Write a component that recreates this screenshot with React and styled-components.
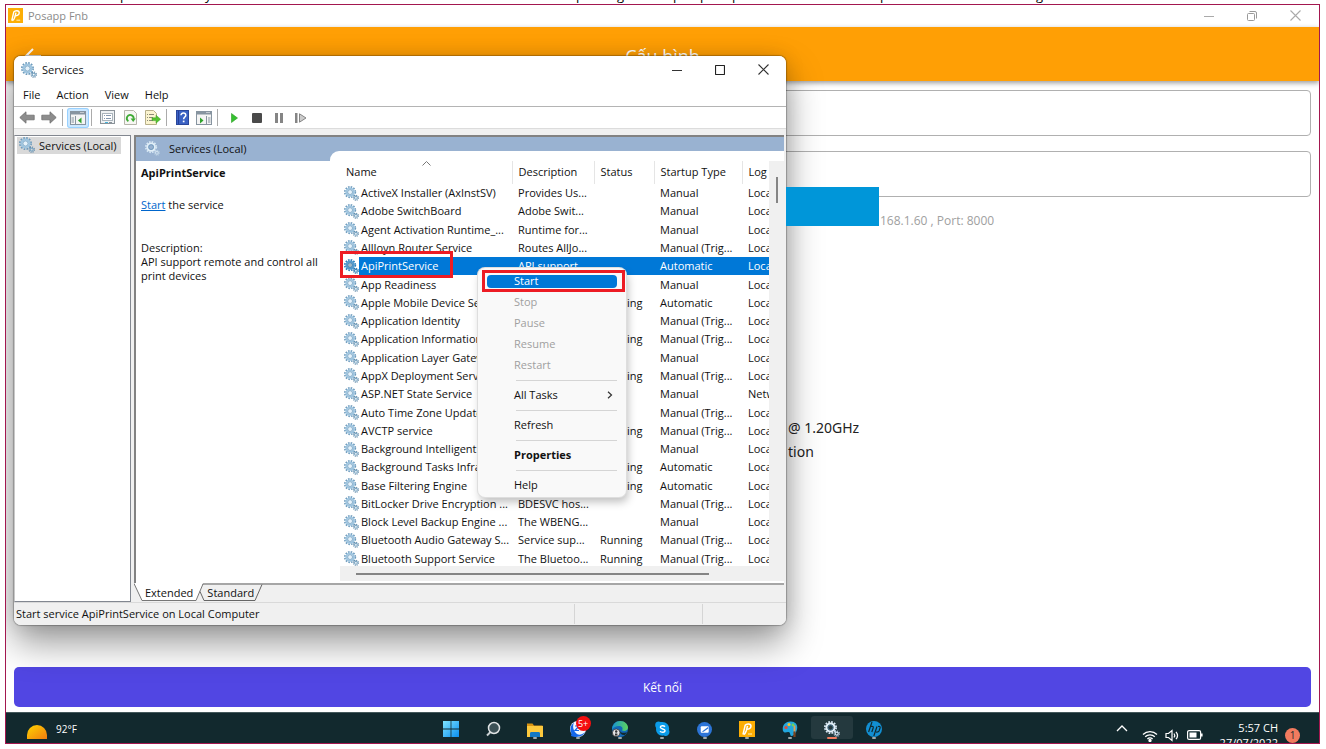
import React from 'react';
import styled, { createGlobalStyle, css } from 'styled-components';

const GlobalStyle = createGlobalStyle`
  * { box-sizing: border-box; }
  body { margin: 0; background: #fff; overflow: hidden; }
  body, button, input, table { font-family: "Open Sans", "Noto Sans", sans-serif; font-size: 11px; }
  button { border: none; background: none; padding: 0; margin: 0; color: inherit; }
  svg { display: block; flex: none; }
`;

const Page = styled.div`
  display: flex;
  flex-direction: column;
  min-height: 100vh;
  padding: 0 6px 5px 5px;
`;

const Caption = styled.div`
  display: grid;
  grid-template-columns: 115px 85px 371px 41px 56px 27px 32px 148px 156px 1fr;
  grid-template-rows: 4px;
  align-items: end;
  height: 4px;
  overflow: hidden;
  font-size: 13px;
  line-height: 18px;
`;

const Screen = styled.main`
  position: relative;
  flex: 1;
  display: flex;
  flex-direction: column;
  border: 1px solid #a3174f;
  overflow: hidden;
`;

const AppTitle = styled.header`
  display: flex;
  align-items: center;
  gap: 5px;
  height: 22px;
  padding: 0 18px 1px 2px;
  color: #8b8b8b;
`;

const TitleButtons = styled.div`
  display: flex;
  align-items: center;
  gap: ${p => p.$gap}px;
  margin-left: auto;
`;

const AppBar = styled.div`
  position: relative;
  display: grid;
  grid-template-columns: 40px 1fr 40px;
  align-items: center;
  height: 54px;
  padding: 3px 18px 0;
  background: #ff9f05;
  color: #fff;
  box-shadow: 0 2px 5px rgba(0, 0, 0, 0.4);
`;

const AppHeading = styled.h1`
  margin: 0;
  font-size: 18px;
  font-weight: 400;
  line-height: 24px;
  text-align: center;
`;

const Form = styled.form`
  flex: 1;
  display: flex;
  flex-direction: column;
  padding: 9px 8px 5px;
`;

const Field = styled.input`
  width: 100%;
  height: 46px;
  margin-bottom: 15px;
  padding: 0 12px;
  border: 1px solid #b0b0b0;
  border-radius: 4px;
  background: #fff;
`;

const Address = styled.p`
  margin: 0;
  padding-left: 866px;
  font-size: 12px;
  line-height: 18px;
  color: #a0a0a0;
`;

const Device = styled.p`
  margin: 186px 0 0;
  padding-left: 774px;
  font-family: "Noto Sans", sans-serif;
  font-size: 14px;
  line-height: 24px;
  color: #222;
`;

const Connect = styled.button`
  height: 40px;
  margin-top: auto;
  border-radius: 5px;
  background: #5146e3;
  color: #fff;
  font-size: 12px;
`;

const Redaction = styled.div`
  position: absolute;
  left: 770px;
  top: 182px;
  width: 103px;
  height: 39px;
  background: #0096d9;
`;

const Window = styled.section`
  position: absolute;
  left: 8px;
  top: 51px;
  width: 772px;
  border-radius: 7px;
  background: #f0f0f0;
  color: #111;
  overflow: hidden;
`;

const WindowShadow = styled.div`
  position: absolute;
  left: 8px;
  top: 51px;
  width: 772px;
  height: 569px;
  border-radius: 7px;
  box-shadow: 0 0 1px 1px rgba(0, 0, 0, 0.25), 0 0 20px rgba(0, 0, 0, 0.12), 0 18px 36px rgba(0, 0, 0, 0.4);
`;

const WindowTitle = styled.div`
  display: flex;
  align-items: center;
  gap: 5px;
  height: 28px;
  padding: 0 17px 1px 7px;
  background: #fff;
`;

const MenuBar = styled.nav`
  display: flex;
  gap: 16px;
  height: 23px;
  padding: 0 9px 2px;
  border-bottom: 1px solid #b4b4b4;
  background: #fff;
`;

const ToolBar = styled.div`
  display: flex;
  align-items: center;
  height: 22px;
  padding-left: 2px;
  background: #fff;
  border-bottom: 1px solid #dcdcdc;
`;

const Tool = styled.button`
  display: grid;
  place-items: center;
  width: ${p => p.$width || 22}px;
  height: 20px;
  ${p => p.$active && css`
    background: #cce8ff;
    box-shadow: inset 0 0 0 1px #99d1ff;
    border-radius: 3px;
  `}
`;

const Divider = styled.span`
  width: 1px;
  height: 17px;
  margin: 0 4px 0 2px;
  background: #ababab;
`;

const Panes = styled.div`
  display: flex;
  gap: 3px;
  padding-top: 6px;
`;

const Tree = styled.div`
  width: 117px;
  height: 467px;
  border: 1px solid #828790;
  border-left-color: #c8c8c8;
  background: #fff;
  padding: 1px 2px;
`;

const TreeItem = styled.div`
  display: flex;
  align-items: center;
  gap: 4px;
  width: 104px;
  height: 17px;
  padding: 0 0 1px 2px;
  background: #d9d9d9;
  white-space: nowrap;
`;

const Right = styled.div`
  flex: 1;
  min-width: 0;
  padding-right: 2px;
`;

const RightFrame = styled.div`
  height: 448px;
  border-left: 2px solid #828282;
  border-top: 2px solid #828282;
  background: #fff;
`;

const PaneHeader = styled.div`
  display: flex;
  align-items: center;
  gap: 9px;
  height: 24px;
  padding: 0 0 1px 9px;
  background: #99b2d1;
`;

const Split = styled.div`
  display: grid;
  grid-template-columns: 194px 1fr;
`;

const Details = styled.div`
  padding: 5px;
  line-height: 14px;
  white-space: nowrap;

  h2 { margin: 0 0 18px; font-size: 11px; line-height: 14px; }
  p { margin: 0 0 29px; }
  a { color: #0066cc; }
`;

const ListPane = styled.div`
  position: relative;
  margin-top: -10px;
  padding: 10px 0 0 10px;
  border-top-left-radius: 9px;
  background: #fff;
`;

const ListScroll = styled.div`
  display: grid;
  grid-template-columns: 1fr 15px;
`;

const TableClip = styled.div`
  height: 405px;
  overflow: hidden;
`;

const Table = styled.table`
  width: 100%;
  height: 407px;
  table-layout: fixed;
  border-collapse: collapse;
  line-height: 16px;
  white-space: nowrap;

  th { position: relative; height: 23px; padding: 0 0 2px 6px; font-weight: 400; text-align: left; border-right: 1px solid #e5e5e5; overflow: hidden; }
  th:last-child { border-right: none; }
  td { padding: 0 0 0 6px; overflow: hidden; }
  td:first-child { padding-left: 4px; }
  td:nth-child(2) { padding-left: 2px; }
`;

const SortArrow = styled.svg`
  position: absolute;
  left: 82px;
  top: 0;
`;

const Row = styled.tr`
  ${p => p.$selected && css`
    td:not(:first-child) { background: #0078d7; color: #fff; }
    svg { filter: brightness(0.75) saturate(2.5); }
  `}
`;

const VerticalBar = styled.div`
  padding: 16px 0 0 7px;
  background: #f0f0f0;

  &::before { content: ""; display: block; width: 2px; height: 26px; background: #858585; }
`;

const HorizontalBar = styled.div`
  height: 15px;
  padding: 7px 75px 0 16px;
  background: #f0f0f0;

  &::before { content: ""; display: block; height: 2px; background: #858585; }
`;

const Tabs = styled.div`
  position: relative;
  display: flex;
  gap: 14px;
  height: 19px;
  padding: 0 0 2px 11px;
  border-top: 2px solid #a6a6a6;
`;

const TabShape = styled.svg`
  position: absolute;
  left: 0;
  top: -2px;
`;

const Tab = styled.button`
  position: relative;
`;

const StatusBar = styled.footer`
  display: grid;
  grid-template-columns: 1fr 128px 83px;
  height: 23px;
  border-top: 1px solid #d9d9d9;

  span { margin: 1px 0; padding-left: 2px; line-height: 19px; border-right: 1px solid #d5d5d5; }
  span:last-child { border-right: none; }
`;

const ContextMenu = styled.div`
  position: absolute;
  left: 472px;
  top: 263px;
  width: 148px;
  padding: 3px 9px 1px;
  border-radius: 7px;
  background: #f9f9f9;
  box-shadow: 0 0 0 1px #dedede, 2px 5px 9px rgba(0, 0, 0, 0.25);

  hr { height: 1px; margin: 4px 0 4px 29px; border: none; background: #d5d5d5; }
`;

const MenuItem = styled.button`
  display: flex;
  align-items: center;
  justify-content: space-between;
  width: 100%;
  height: 21px;
  padding: 0 4px 2px 27px;
  color: #111;
  font-weight: ${p => (p.$bold ? 700 : 400)};

  &:disabled { color: #a0a0a0; }
  ${p => p.$hot && css`
    height: 13px;
    margin: 4px 0;
    border-radius: 4px;
    background: #0078d7;
    color: #fff;
  `}
`;

const Marker = styled.div`
  position: absolute;
  left: ${p => p.$x}px;
  top: ${p => p.$y}px;
  width: ${p => p.$w}px;
  height: ${p => p.$h}px;
  border: 3px solid #ed1c24;
`;

const TaskBar = styled.footer`
  position: relative;
  display: grid;
  grid-template-columns: 1fr 466px 1fr;
  grid-template-rows: 30px;
  height: 31px;
  border-top: 1px solid #44585b;
  background: #12292e;
  color: #fff;
  overflow: hidden;
`;

const Weather = styled.div`
  display: flex;
  align-items: flex-start;
  gap: 9px;
  padding: 12px 0 0 21px;
  font-size: 10px;
  line-height: 10px;

  span { margin-top: -1px; }
`;

const Apps = styled.div`
  display: grid;
  grid-template-columns: repeat(11, 1fr);
  padding: 3px 0 4px;
`;

const AppButton = styled.button`
  position: relative;
  display: grid;
  justify-items: center;
  align-content: end;
  border-radius: 3px;
  background: ${p => (p.$active ? '#24393e' : 'none')};

  &::after {
    content: "";
    width: ${p => (p.$active ? 10 : 4)}px;
    height: 2px;
    border-radius: 1px;
    background: ${p => (p.$active ? '#f27b5f' : p.$open ? '#a0a9ab' : 'transparent')};
  }
`;

const Count = styled.span`
  position: absolute;
  left: 19px;
  top: 0;
  width: 15px;
  height: 15px;
  border-radius: 50%;
  background: #f40f0f;
  font-size: 9px;
  line-height: 15px;
`;

const Tray = styled.div`
  display: flex;
  justify-content: flex-end;
  align-items: flex-start;
  gap: 7px;
  padding: 7px 19px 0 0;

  > svg { margin-top: 9px; }
  > svg:first-child { margin: 4px 7px 0 0; }
`;

const Clock = styled.div`
  width: 68px;
  font-size: 11px;
  line-height: 15px;
  text-align: right;
`;

const Notice = styled.span`
  width: 15px;
  height: 15px;
  margin-top: 8px;
  border-radius: 50%;
  background: #f27b5f;
  color: #1b2b30;
  font-size: 10px;
  line-height: 15px;
  text-align: center;
`;

const Gears = ({ size = 16, pale }) => (
    <svg width={size} height={size} viewBox="0 0 16 16" fill="none">
        <circle cx="6.5" cy="6.5" r="5.6" stroke={pale ? '#d5e6f3' : '#6f9cbd'} strokeWidth="1.8" strokeDasharray="1.7 1.23" />
        <circle cx="6.5" cy="6.5" r="4" fill={pale ? 'none' : '#e6f2fa'} stroke={pale ? '#e2eff8' : '#9dc4df'} strokeWidth="2" />
        <circle cx="6.5" cy="6.5" r="2.6" stroke="#5f90b4" strokeWidth="0.7" />
        <circle cx="12.7" cy="12.6" r="2.6" stroke={pale ? '#b8cfe2' : '#5d86a6'} strokeWidth="1.2" strokeDasharray="1.1 0.94" />
        <circle cx="12.7" cy="12.6" r="1.5" stroke={pale ? '#cfe0ee' : '#7ea8c5'} strokeWidth="1.2" />
    </svg>
);

const PosLogo = ({ size = 15 }) => (
    <svg width={size} height={size} viewBox="0 0 16 16">
        <rect width="16" height="16" fill="#fcae05" />
        <path d="M4 13.5 6.2 4.2C7.5 2.4 12 2.3 12 5.1c0 2.4-2.4 3.5-5 3.2M8.5 4.9 7.4 9.4c-.7 2-1.1 3.6-2.6 4.1" fill="none" stroke="#fff" strokeWidth="1.5" />
        <path d="M9 13h4" stroke="#fff3c8" strokeWidth="1" />
    </svg>
);

const Minimize = ({ color }) => (
    <svg width="10" height="10" viewBox="0 0 10 10"><path d="M0 5.5h10" stroke={color} /></svg>
);

const Maximize = ({ color, restore }) => (
    <svg width="10" height="10" viewBox="0 0 10 10" fill="none" stroke={color}>
        {restore ? (
            <>
                <rect x="0.5" y="2.5" width="7" height="7" rx="1" />
                <path d="M2.5.5H8A1.5 1.5 0 0 1 9.5 2v5.5" />
            </>
        ) : (
            <rect x="0.5" y="0.5" width="9" height="9" rx="0.6" strokeWidth="1.2" />
        )}
    </svg>
);

const Close = ({ color }) => (
    <svg width="11" height="11" viewBox="0 0 11 11"><path d="M.5.5l10 10M10.5.5l-10 10" stroke={color} strokeWidth="1.1" /></svg>
);

const ArrowIcon = ({ flip }) => (
    <svg width="16" height="13" viewBox="0 0 16 13">
        <path
            d="M.8 6.5 7 .8v3.4h8.2v4.6H7v3.4z"
            fill="#8d8d8d"
            stroke="#6e6e6e"
            strokeWidth="0.8"
            transform={flip ? 'translate(16 0) scale(-1 1)' : undefined}
        />
    </svg>
);

const PanelIcon = ({ flip }) => (
    <svg width="16" height="14" viewBox="0 0 16 14">
        <rect x=".5" y=".5" width="15" height="13" fill="#f4f4f4" stroke="#8794a0" />
        <path d="M1 1h14v2.5H1z" fill="#8794a0" />
        <path d="M10.5 1.5h1M12.5 1.5h1" stroke="#fff" />
        <path d={flip ? 'M10.5 5v9M12 7h2.5M12 9h2.5M12 11h2.5' : 'M5.5 5v9M1.5 7H4M1.5 9H4M1.5 11H4'} stroke="#8794a0" />
        <path d={flip ? 'M4 6.5 7.5 9.5 4 12.5z' : 'M11.5 6.5 8 9.5l3.5 3z'} fill="#2fa32b" />
    </svg>
);

const PropertiesIcon = () => (
    <svg width="15" height="15" viewBox="0 0 15 15">
        <rect x=".5" y=".5" width="14" height="13" fill="#eef1f3" stroke="#8a9299" />
        <rect x="2.5" y="3.5" width="10" height="7" fill="#fff" stroke="#aab4bc" />
        <path d="M4 5.5h1M6 5.5h5M4 8.5h1M6 8.5h5" stroke="#8498b0" />
        <path d="M5 12.5h3" stroke="#46b2d8" />
        <path d="M9 12.5h3" stroke="#8a9299" />
    </svg>
);

const RefreshIcon = () => (
    <svg width="13" height="15" viewBox="0 0 13 15">
        <path d="M.5.5h9l3 3v11H.5z" fill="#f7f7f3" stroke="#b5b5ab" />
        <path d="M4.4 11.2A3.4 3.4 0 1 1 9.6 8.8" fill="none" stroke="#3eaa35" strokeWidth="1.8" />
        <path d="M6.6 8.4h5.2L9.2 12z" fill="#3eaa35" />
    </svg>
);

const ExportIcon = () => (
    <svg width="16" height="15" viewBox="0 0 16 15">
        <path d="M.5.5h8l3 3v11H.5z" fill="#fbf4cf" stroke="#b8b08a" />
        <path d="M2 4.5h1M4 4.5h5M2 7.5h1M4 7.5h4M2 10.5h1M4 10.5h4" stroke="#8b8b78" />
        <path d="M7 7.8h4V5.2l4.6 4-4.6 4v-2.6H7z" fill="#55c330" stroke="#419e26" strokeWidth=".5" />
    </svg>
);

const HelpIcon = () => (
    <svg width="13" height="15" viewBox="0 0 13 15">
        <rect x=".5" y=".5" width="12" height="14" fill="#3b62c4" stroke="#2b479b" />
        <path d="M2.5 1v13" stroke="#26409a" />
        <path d="M5 5.2c0-3 4.8-2.8 4.8 0 0 1.7-2.2 1.9-2.2 4" fill="none" stroke="#fff" strokeWidth="1.5" />
        <rect x="6.8" y="10.6" width="1.7" height="1.7" fill="#fff" />
    </svg>
);

const services = [
    ['ActiveX Installer (AxInstSV)', 'Provides Us...', '', 'Manual', 'Local'],
    ['Adobe SwitchBoard', 'Adobe Swit...', '', 'Manual', 'Local'],
    ['Agent Activation Runtime_...', 'Runtime for...', '', 'Manual', 'Local'],
    ['AllJoyn Router Service', 'Routes AllJo...', '', 'Manual (Trig...', 'Local'],
    ['ApiPrintService', 'API support ...', '', 'Automatic', 'Local'],
    ['App Readiness', '', '', 'Manual', 'Local'],
    ['Apple Mobile Device Service', '', 'Running', 'Automatic', 'Local'],
    ['Application Identity', '', '', 'Manual (Trig...', 'Local'],
    ['Application Information', '', 'Running', 'Manual (Trig...', 'Local'],
    ['Application Layer Gateway ...', '', '', 'Manual', 'Local'],
    ['AppX Deployment Service ...', '', 'Running', 'Manual (Trig...', 'Local'],
    ['ASP.NET State Service', '', '', 'Manual', 'Network'],
    ['Auto Time Zone Updater', '', '', 'Manual (Trig...', 'Local'],
    ['AVCTP service', '', 'Running', 'Manual (Trig...', 'Local'],
    ['Background Intelligent T...', '', '', 'Manual', 'Local'],
    ['Background Tasks Infras...', '', 'Running', 'Automatic', 'Local'],
    ['Base Filtering Engine', '', 'Running', 'Automatic', 'Local'],
    ['BitLocker Drive Encryption ...', 'BDESVC hos...', '', 'Manual (Trig...', 'Local'],
    ['Block Level Backup Engine ...', 'The WBENG...', '', 'Manual', 'Local'],
    ['Bluetooth Audio Gateway S...', 'Service sup...', 'Running', 'Manual (Trig...', 'Local'],
    ['Bluetooth Support Service', 'The Bluetoo...', 'Running', 'Manual (Trig...', 'Local'],
];

const NameCol = styled.col`
  width: ${p => p.$w}px;
`;

const ServiceTable = () => (
    <Table>
        <colgroup>
            {[19, 153, 82, 60, 88].map(w => <NameCol key={w} $w={w} />)}
            <col />
        </colgroup>
        <thead>
            <tr>
                <th colSpan={2}>
                    Name
                    <SortArrow width="9" height="5" viewBox="0 0 9 5"><path d="M.5 4.5l4-4 4 4" fill="none" stroke="#777" /></SortArrow>
                </th>
                <th>Description</th>
                <th>Status</th>
                <th>Startup Type</th>
                <th>Log</th>
            </tr>
        </thead>
        <tbody>
            {services.map(([name, description, status, startup, account]) => (
                <Row key={name} $selected={name === 'ApiPrintService'}>
                    <td><Gears size={15} /></td>
                    <td>{name}</td>
                    <td>{description}</td>
                    <td>{status}</td>
                    <td>{startup}</td>
                    <td>{account}</td>
                </Row>
            ))}
        </tbody>
    </Table>
);

const ServicesWindow = () => (
    <Window>
        <WindowTitle>
            <Gears />
            <span>Services</span>
            <TitleButtons $gap={33}>
                <button aria-label="Minimize"><Minimize color="#333" /></button>
                <button aria-label="Maximize"><Maximize color="#222" /></button>
                <button aria-label="Close"><Close color="#333" /></button>
            </TitleButtons>
        </WindowTitle>
        <MenuBar>
            <button>File</button>
            <button>Action</button>
            <button>View</button>
            <button>Help</button>
        </MenuBar>
        <ToolBar>
            <Tool aria-label="Back"><ArrowIcon /></Tool>
            <Tool aria-label="Forward"><ArrowIcon flip /></Tool>
            <Divider />
            <Tool $active aria-label="Console tree"><PanelIcon /></Tool>
            <Divider />
            <Tool aria-label="Properties"><PropertiesIcon /></Tool>
            <Tool aria-label="Refresh" $width={24}><RefreshIcon /></Tool>
            <Tool aria-label="Export list"><ExportIcon /></Tool>
            <Divider />
            <Tool aria-label="Help"><HelpIcon /></Tool>
            <Tool aria-label="Action pane"><PanelIcon flip /></Tool>
            <Divider />
            <Tool aria-label="Start" $width={24}>
                <svg width="7" height="10" viewBox="0 0 7 10"><path d="M.5.5 6.5 5l-6 4.5z" fill="#35c12f" stroke="#289d24" strokeWidth=".6" /></svg>
            </Tool>
            <Tool aria-label="Stop">
                <svg width="10" height="10" viewBox="0 0 10 10"><rect width="10" height="10" rx="1" fill="#4a4a4a" /></svg>
            </Tool>
            <Tool aria-label="Pause">
                <svg width="8" height="10" viewBox="0 0 8 10"><path d="M0 0h3v10H0zM5 0h3v10H5z" fill="#858585" /></svg>
            </Tool>
            <Tool aria-label="Restart">
                <svg width="12" height="10" viewBox="0 0 12 10"><path d="M0 0h2.5v10H0z" fill="#858585" /><path d="M4.5.8 11 5 4.5 9.2z" fill="#ccc" stroke="#858585" /></svg>
            </Tool>
        </ToolBar>
        <Panes>
            <Tree>
                <TreeItem><Gears />Services (Local)</TreeItem>
            </Tree>
            <Right>
                <RightFrame>
                    <PaneHeader><Gears size={15} pale />Services (Local)</PaneHeader>
                    <Split>
                        <Details>
                            <h2>ApiPrintService</h2>
                            <p><a href="#start">Start</a> the service</p>
                            Description:<br />
                            API support remote and control all<br />
                            print devices
                        </Details>
                        <ListPane>
                            <ListScroll>
                                <TableClip><ServiceTable /></TableClip>
                                <VerticalBar />
                            </ListScroll>
                            <HorizontalBar />
                        </ListPane>
                    </Split>
                </RightFrame>
                <Tabs>
                    <TabShape width="132" height="19" viewBox="0 0 132 19">
                        <path d="M0 0h69l-7 17.5H8z" fill="#fff" />
                        <path d="M0 .5 8 17.5h54L69 1" fill="none" stroke="#777" />
                        <path d="M66 8.500l4 9h51l7-16" fill="none" stroke="#666" />
                    </TabShape>
                    <Tab>Extended</Tab>
                    <Tab>Standard</Tab>
                </Tabs>
            </Right>
        </Panes>
        <StatusBar>
            <span>Start service ApiPrintService on Local Computer</span>
            <span />
            <span />
        </StatusBar>
    </Window>
);

const ServiceMenu = () => (
    <ContextMenu>
        <MenuItem $hot>Start</MenuItem>
        <MenuItem disabled>Stop</MenuItem>
        <MenuItem disabled>Pause</MenuItem>
        <MenuItem disabled>Resume</MenuItem>
        <MenuItem disabled>Restart</MenuItem>
        <hr />
        <MenuItem>
            All Tasks
            <svg width="6" height="8" viewBox="0 0 6 8"><path d="M1 .8 4.500 4 1 7.200" fill="none" stroke="#333" strokeWidth="1.200" /></svg>
        </MenuItem>
        <hr />
        <MenuItem>Refresh</MenuItem>
        <hr />
        <MenuItem $bold>Properties</MenuItem>
        <hr />
        <MenuItem>Help</MenuItem>
    </ContextMenu>
);

const StartLogo = () => (
    <svg width="16" height="16" viewBox="0 0 16 16">
        <defs><linearGradient id="win" x2="1" y2="1"><stop stopColor="#7fe3ff" /><stop offset="1" stopColor="#0a8ef0" /></linearGradient></defs>
        <path d="M0 0h7.600v7.600H0zM8.400 0H16v7.600H8.400zM0 8.400h7.600V16H0zM8.400 8.400H16V16H8.400z" fill="url(#win)" />
    </svg>
);

const SearchLogo = () => (
    <svg width="16" height="16" viewBox="0 0 16 16">
        <path d="M2 14.500 5.500 11" stroke="#c9d0d2" strokeWidth="2" />
        <circle cx="9" cy="7" r="5.500" fill="#3c5156" stroke="#dfe3e4" strokeWidth="1.500" />
    </svg>
);

const FolderLogo = () => (
    <svg width="16" height="15" viewBox="0 0 16 15">
        <path d="M0 1.500h5.500l1.500 2h8.500V14H0z" fill="#d99312" />
        <path d="M0 4h16v11H0z" fill="#fdc93d" />
        <path d="M3 15v-3.500c0-1 .6-1.500 1.500-1.500h7c1 0 1.500.6 1.500 1.500V15z" fill="#1378c4" />
    </svg>
);

const ChatLogo = () => (
    <svg width="16" height="16" viewBox="0 0 16 16">
        <circle cx="8" cy="8" r="8" fill="#f3f7ff" />
        <path d="M4 1.500C.4 4-.6 9 1.500 12.400L1 15c6 2 12 .6 14-4-4 4-8 3-10 0S2.500 5 4 1.500z" fill="#1467ea" />
        <path d="M5 5h4L5 9.500h4" fill="none" stroke="#1467ea" strokeWidth="1.200" />
    </svg>
);

const EdgeLogo = () => (
    <svg width="16" height="16" viewBox="0 0 16 16">
        <defs><linearGradient id="edge" x2="1"><stop stopColor="#1793d1" /><stop offset="1" stopColor="#5ed65a" /></linearGradient></defs>
        <circle cx="8" cy="8" r="8" fill="#1268b8" />
        <path d="M.2 7C1 2.800 4.300 0 8.200 0 13 0 16 3.500 16 6.600c0 3.200-3.600 4.200-6 3 1.300-2 .4-4.600-3-4.600C4 5 1.300 6 .2 9z" fill="url(#edge)" />
        <path d="M8 10c1 2 4 2.500 7 1l-2 3c-3 .6-5-1-5-4z" fill="#12292e" />
        <circle cx="4.200" cy="11.800" r="3.800" fill="#e5e5e5" stroke="#333" strokeWidth=".8" />
        <circle cx="4.200" cy="10.500" r="1.200" fill="#333" />
        <path d="M3 14.500v-2h2.400v2" fill="#333" />
    </svg>
);

const SkypeLogo = () => (
    <svg width="15" height="16" viewBox="0 0 16 16">
        <path d="M1 1c2-1.500 4-1 5-.4 6-1.200 10 3.400 8.900 8.400C17 13 13 17 9.500 15 4 16 .4 11.500 1.200 7-.2 4.500 0 2.500 1 1z" fill="#0a9be8" />
        <path d="M10.600 5.600C9.500 4 5.600 4 5.700 6.200c.1 2.200 5 1.300 5 3.500 0 2.400-4.200 2.300-5.300.6" fill="none" stroke="#fff" strokeWidth="1.500" />
    </svg>
);

const MailLogo = () => (
    <svg width="15" height="15" viewBox="0 0 16 16">
        <circle cx="8" cy="8" r="8" fill="#2c74d6" />
        <rect x="4" y="4.500" width="8.500" height="7" rx="1" fill="#fff" />
        <path d="M5 10.500 12 5v2l-5 3.500z" fill="#2c74d6" />
    </svg>
);

const PaintLogo = () => (
    <svg width="16" height="16" viewBox="0 0 16 16">
        <path d="M1 10C-.5 4 4 0 9 .5c5 .4 7 3.500 6 8-1 3.500-3 6-5 6.500-2.500.4-1-3.500-3.500-4C4.500 10.600 3 13 1 10z" fill="#22a6dc" />
        <circle cx="4" cy="6.500" r="1.600" fill="#e84a35" />
        <circle cx="7" cy="3.500" r="1.500" fill="#f9c22e" />
        <circle cx="11" cy="4" r="1.400" fill="#6ad457" />
        <path d="M12.500 4.500v6" stroke="#e5a14c" strokeWidth="1.800" />
        <path d="M12.500 10.500V16" stroke="#7d431f" strokeWidth="2.200" />
    </svg>
);

const HpLogo = () => (
    <svg width="16" height="16" viewBox="0 0 16 16">
        <circle cx="8" cy="8" r="8" fill="#128fd3" />
        <path d="M6 1 2.600 11M4.700 5.500c2-.5 3 0 2.500 1.500L5.800 11M12 5.500c2-.5 2.500.4 2 1.700L13 10c-.4 1-1.200 1.200-3 1M11 5.500 7.800 15" fill="none" stroke="#12292e" strokeWidth="1.200" />
    </svg>
);

const pinned = [
    { name: 'Start', icon: <StartLogo /> },
    { name: 'Search', icon: <SearchLogo /> },
    { name: 'File Explorer', icon: <FolderLogo />, open: true },
    { name: 'Zalo', icon: <ChatLogo />, open: true, count: '5+' },
    { name: 'Edge', icon: <EdgeLogo />, open: true },
    { name: 'Skype', icon: <SkypeLogo />, open: true },
    { name: 'Mail', icon: <MailLogo />, open: true },
    { name: 'Posapp', icon: <PosLogo size={16} />, open: true },
    { name: 'Paint', icon: <PaintLogo />, open: true },
    { name: 'Services', icon: <Gears size={16} pale />, open: true, active: true },
    { name: 'HP', icon: <HpLogo />, open: true },
];

// only the descenders of the line above reach into view
const captionTail = ['p', 'y', 'p', 'g', 'p', 'p', 'p', 'p', 'g'];

export default function App() {
    return (
        <Page>
            <GlobalStyle />
            <Caption>
                <span />
                {captionTail.map((letter, i) => <span key={i}>{letter}</span>)}
            </Caption>
            <Screen>
                <AppTitle>
                    <PosLogo />
                    <span>Posapp Fnb</span>
                    <TitleButtons $gap={33}>
                        <button aria-label="Minimize app"><Minimize color="#aaa" /></button>
                        <button aria-label="Restore app"><Maximize color="#999" restore /></button>
                        <button aria-label="Close app"><Close color="#aaa" /></button>
                    </TitleButtons>
                </AppTitle>
                <AppBar>
                    <button aria-label="Back to app">
                        <svg width="18" height="16" viewBox="0 0 18 16" fill="none" stroke="#fff" strokeWidth="2"><path d="M17 8H2M9 1 2 8l7 7" /></svg>
                    </button>
                    <AppHeading>Cấu hình</AppHeading>
                </AppBar>
                <Form onSubmit={e => e.preventDefault()}>
                    <Field aria-label="Server" />
                    <Field aria-label="Port" />
                    <Address>168.1.60 , Port: 8000</Address>
                    <Device>@ 1.20GHz<br />tion</Device>
                    <Connect>Kết nối</Connect>
                </Form>
                <WindowShadow />
                <Redaction />
                <ServicesWindow />
                <ServiceMenu />
                <Marker $x={334} $y={246} $w={113} $h={27} />
                <Marker $x={476} $y={265} $w={143} $h={22} />
                <TaskBar>
                    <Weather>
                        <svg width="20" height="14" viewBox="0 0 20 14">
                            <defs><linearGradient id="sun" x2="1" y2="1"><stop stopColor="#ffd500" /><stop offset="1" stopColor="#f07c10" /></linearGradient></defs>
                            <path d="M0 14v-4a10 10 0 0 1 20 0v4z" fill="url(#sun)" />
                        </svg>
                        <span>92°F</span>
                    </Weather>
                    <Apps>
                        {pinned.map(app => (
                            <AppButton key={app.name} aria-label={app.name} $open={app.open} $active={app.active}>
                                {app.icon}
                                {app.count && <Count>{app.count}</Count>}
                            </AppButton>
                        ))}
                    </Apps>
                    <Tray>
                        <svg width="12" height="8" viewBox="0 0 12 8"><path d="M1 7l5-5 5 5" fill="none" stroke="#fff" strokeWidth="1.300" /></svg>
                        <svg width="16" height="13" viewBox="0 0 16 13" fill="none" stroke="#fff" strokeWidth="1.300">
                            <path d="M1 5.500a10 10 0 0 1 14 0M3.200 7.800a6.800 6.800 0 0 1 9.600 0M5.400 10a3.700 3.700 0 0 1 5.200 0" />
                            <circle cx="8" cy="11.500" r="1" fill="#fff" />
                        </svg>
                        <svg width="15" height="13" viewBox="0 0 15 13" fill="none" stroke="#fff" strokeWidth="1.200">
                            <path d="M1 4.500h2.500L7 1.500v10l-3.500-3H1zM9 4.500q1.500 2 0 4M11 2.800q3 3.700 0 7.400" />
                        </svg>
                        <svg width="16" height="12" viewBox="0 0 16 12">
                            <rect x=".6" y="1.600" width="13" height="8.800" rx="1.500" fill="none" stroke="#fff" strokeWidth="1.200" />
                            <path d="M2.500 3.500h7v5h-7zM14 4.500h1.600v3H14z" fill="#fff" />
                        </svg>
                        <Clock>5:57 CH<br />27/07/2022</Clock>
                        <Notice>1</Notice>
                    </Tray>
                </TaskBar>
            </Screen>
        </Page>
    );
}
